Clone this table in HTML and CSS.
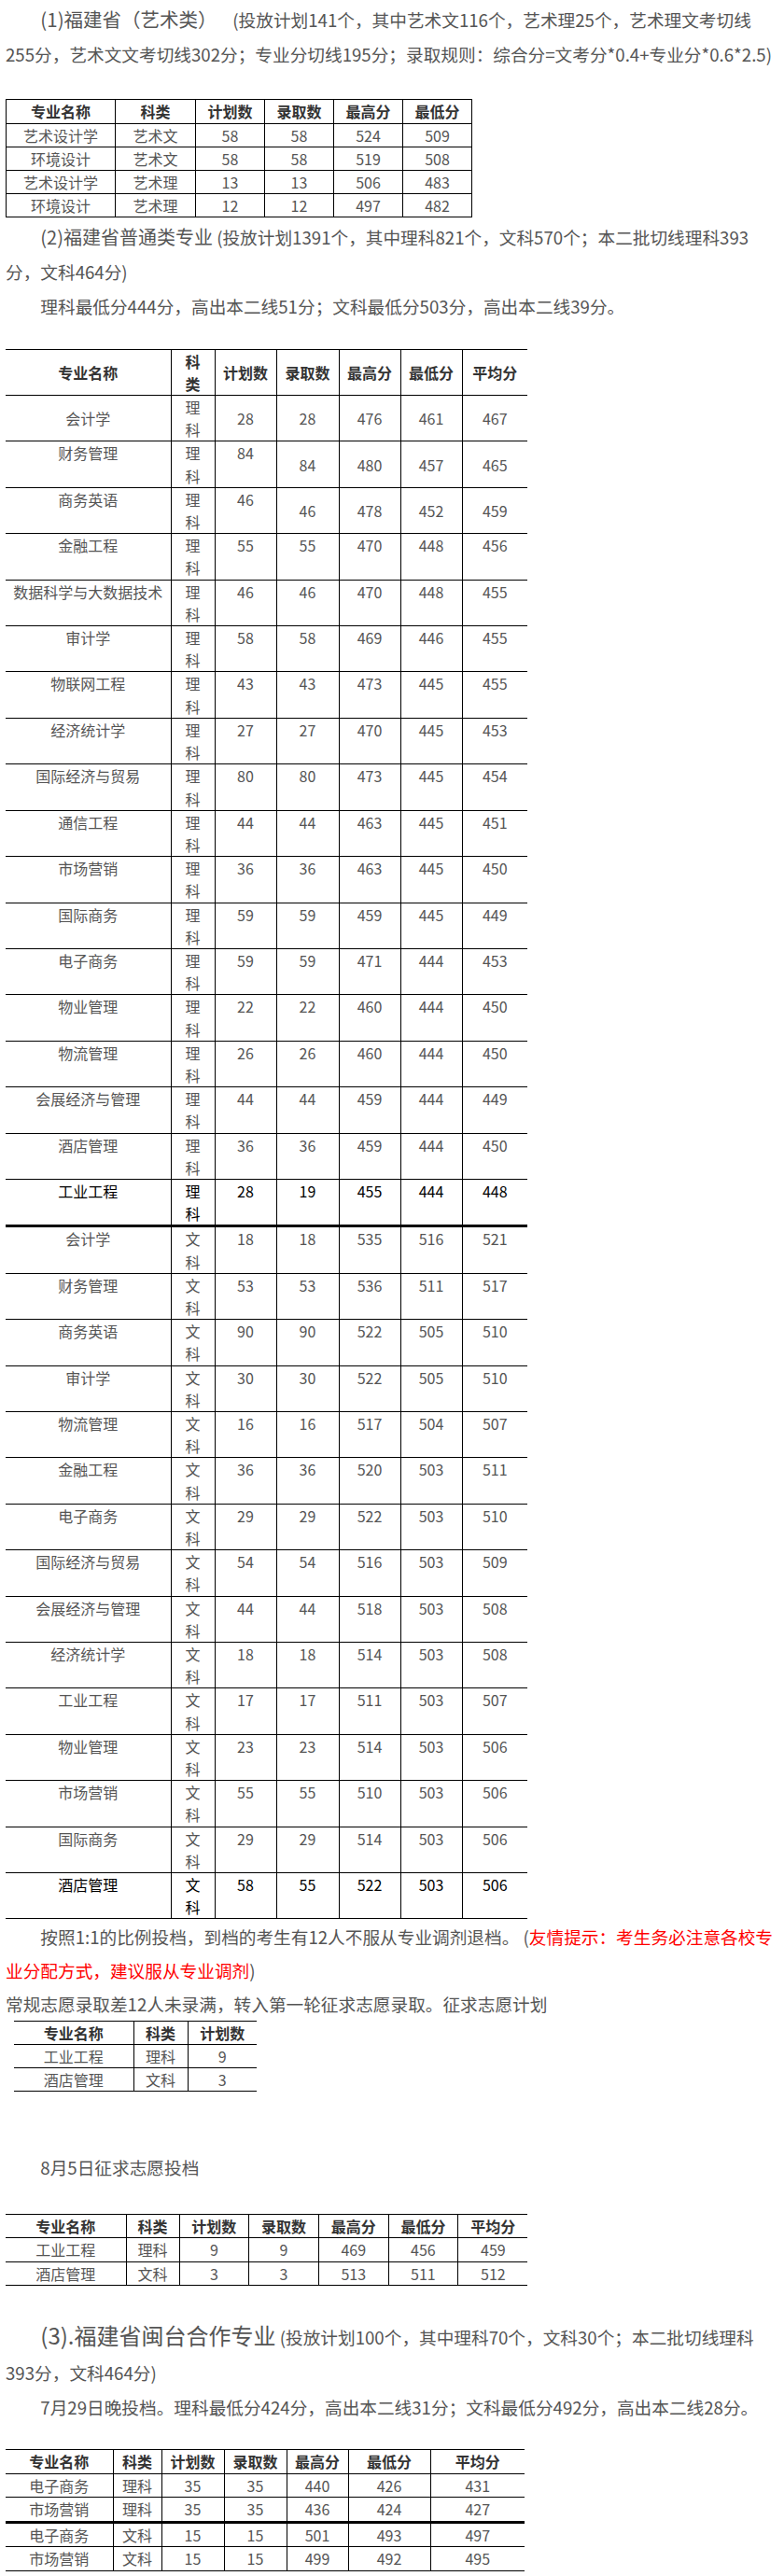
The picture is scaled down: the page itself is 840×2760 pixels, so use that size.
FILE: index.html
```html
<!DOCTYPE html>
<html lang="zh-CN">
<head>
<meta charset="utf-8">
<title>福建省录取情况</title>
<link rel="stylesheet" href="styles.css">
</head>
<body>
<div class="page">
  <p class="ind p1"><span class="lead lead-a">(1)福建省（艺术类）</span>&nbsp;&nbsp;&nbsp;&nbsp;(投放计划141个，其中艺术文116个，艺术理25个，艺术理文考切线255分，艺术文文考切线302分；专业分切线195分；录取规则：综合分=文考分*0.4+专业分*0.6*2.5)</p>

  <table class="t1">
    <colgroup><col class="c1"><col class="c2"><col class="c3"><col class="c3"><col class="c3"><col class="c3"></colgroup>
    <thead>
      <tr><th>专业名称</th><th>科类</th><th>计划数</th><th>录取数</th><th>最高分</th><th>最低分</th></tr>
    </thead>
    <tbody>
      <tr><td>艺术设计学</td><td>艺术文</td><td>58</td><td>58</td><td>524</td><td>509</td></tr>
      <tr><td>环境设计</td><td>艺术文</td><td>58</td><td>58</td><td>519</td><td>508</td></tr>
      <tr><td>艺术设计学</td><td>艺术理</td><td>13</td><td>13</td><td>506</td><td>483</td></tr>
      <tr><td>环境设计</td><td>艺术理</td><td>12</td><td>12</td><td>497</td><td>482</td></tr>
    </tbody>
  </table>

  <p class="ind p2"><span class="lead">(2)福建省普通类专业</span> (投放计划1391个，其中理科821个，文科570个；本二批切线理科393分，文科464分)</p>
  <p class="ind">理科最低分444分，高出本二线51分；文科最低分503分，高出本二线39分。</p>

  <table class="t2 open">
    <colgroup><col class="c1"><col class="c2"><col class="c3"><col class="c4"><col class="c5"><col class="c6"><col class="c7"></colgroup>
    <thead>
      <tr><th>专业名称</th><th class="k">科类</th><th>计划数</th><th>录取数</th><th>最高分</th><th>最低分</th><th>平均分</th></tr>
    </thead>
    <tbody>
      <tr class="mid"><td>会计学</td><td class="k">理科</td><td>28</td><td>28</td><td>476</td><td>461</td><td>467</td></tr>
      <tr><td>财务管理</td><td class="k">理科</td><td>84</td><td class="m">84</td><td class="m">480</td><td class="m">457</td><td class="m">465</td></tr>
      <tr><td>商务英语</td><td class="k">理科</td><td>46</td><td class="m">46</td><td class="m">478</td><td class="m">452</td><td class="m">459</td></tr>
      <tr><td>金融工程</td><td class="k">理科</td><td>55</td><td>55</td><td>470</td><td>448</td><td>456</td></tr>
      <tr><td>数据科学与大数据技术</td><td class="k">理科</td><td>46</td><td>46</td><td>470</td><td>448</td><td>455</td></tr>
      <tr><td>审计学</td><td class="k">理科</td><td>58</td><td>58</td><td>469</td><td>446</td><td>455</td></tr>
      <tr><td>物联网工程</td><td class="k">理科</td><td>43</td><td>43</td><td>473</td><td>445</td><td>455</td></tr>
      <tr><td>经济统计学</td><td class="k">理科</td><td>27</td><td>27</td><td>470</td><td>445</td><td>453</td></tr>
      <tr><td>国际经济与贸易</td><td class="k">理科</td><td>80</td><td>80</td><td>473</td><td>445</td><td>454</td></tr>
      <tr><td>通信工程</td><td class="k">理科</td><td>44</td><td>44</td><td>463</td><td>445</td><td>451</td></tr>
      <tr><td>市场营销</td><td class="k">理科</td><td>36</td><td>36</td><td>463</td><td>445</td><td>450</td></tr>
      <tr><td>国际商务</td><td class="k">理科</td><td>59</td><td>59</td><td>459</td><td>445</td><td>449</td></tr>
      <tr><td>电子商务</td><td class="k">理科</td><td>59</td><td>59</td><td>471</td><td>444</td><td>453</td></tr>
      <tr><td>物业管理</td><td class="k">理科</td><td>22</td><td>22</td><td>460</td><td>444</td><td>450</td></tr>
      <tr><td>物流管理</td><td class="k">理科</td><td>26</td><td>26</td><td>460</td><td>444</td><td>450</td></tr>
      <tr><td>会展经济与管理</td><td class="k">理科</td><td>44</td><td>44</td><td>459</td><td>444</td><td>449</td></tr>
      <tr><td>酒店管理</td><td class="k">理科</td><td>36</td><td>36</td><td>459</td><td>444</td><td>450</td></tr>
      <tr class="em sep"><td>工业工程</td><td class="k">理科</td><td>28</td><td>19</td><td>455</td><td>444</td><td>448</td></tr>
      <tr><td>会计学</td><td class="k">文科</td><td>18</td><td>18</td><td>535</td><td>516</td><td>521</td></tr>
      <tr><td>财务管理</td><td class="k">文科</td><td>53</td><td>53</td><td>536</td><td>511</td><td>517</td></tr>
      <tr><td>商务英语</td><td class="k">文科</td><td>90</td><td>90</td><td>522</td><td>505</td><td>510</td></tr>
      <tr><td>审计学</td><td class="k">文科</td><td>30</td><td>30</td><td>522</td><td>505</td><td>510</td></tr>
      <tr><td>物流管理</td><td class="k">文科</td><td>16</td><td>16</td><td>517</td><td>504</td><td>507</td></tr>
      <tr><td>金融工程</td><td class="k">文科</td><td>36</td><td>36</td><td>520</td><td>503</td><td>511</td></tr>
      <tr><td>电子商务</td><td class="k">文科</td><td>29</td><td>29</td><td>522</td><td>503</td><td>510</td></tr>
      <tr><td>国际经济与贸易</td><td class="k">文科</td><td>54</td><td>54</td><td>516</td><td>503</td><td>509</td></tr>
      <tr><td>会展经济与管理</td><td class="k">文科</td><td>44</td><td>44</td><td>518</td><td>503</td><td>508</td></tr>
      <tr><td>经济统计学</td><td class="k">文科</td><td>18</td><td>18</td><td>514</td><td>503</td><td>508</td></tr>
      <tr><td>工业工程</td><td class="k">文科</td><td>17</td><td>17</td><td>511</td><td>503</td><td>507</td></tr>
      <tr><td>物业管理</td><td class="k">文科</td><td>23</td><td>23</td><td>514</td><td>503</td><td>506</td></tr>
      <tr><td>市场营销</td><td class="k">文科</td><td>55</td><td>55</td><td>510</td><td>503</td><td>506</td></tr>
      <tr><td>国际商务</td><td class="k">文科</td><td>29</td><td>29</td><td>514</td><td>503</td><td>506</td></tr>
      <tr class="em"><td>酒店管理</td><td class="k">文科</td><td>58</td><td>55</td><td>522</td><td>503</td><td>506</td></tr>
    </tbody>
  </table>

  <p class="ind p4">按照1:1的比例投档，到档的考生有12人不服从专业调剂退档。 (<span class="red">友情提示：考生务必注意各校专业分配方式，建议服从专业调剂</span>)</p>
  <p class="p5">常规志愿录取差12人未录满，转入第一轮征求志愿录取。征求志愿计划</p>

  <table class="t3 open">
    <colgroup><col class="c1"><col class="c2"><col class="c3"></colgroup>
    <thead>
      <tr><th>专业名称</th><th>科类</th><th>计划数</th></tr>
    </thead>
    <tbody>
      <tr><td>工业工程</td><td>理科</td><td>9</td></tr>
      <tr><td>酒店管理</td><td>文科</td><td>3</td></tr>
    </tbody>
  </table>

  <p class="ind p6">8月5日征求志愿投档</p>

  <table class="t4 open">
    <colgroup><col class="c1"><col class="c2"><col class="c3"><col class="c3"><col class="c3"><col class="c3"><col class="c3"></colgroup>
    <thead>
      <tr><th>专业名称</th><th>科类</th><th>计划数</th><th>录取数</th><th>最高分</th><th>最低分</th><th>平均分</th></tr>
    </thead>
    <tbody>
      <tr><td>工业工程</td><td>理科</td><td>9</td><td>9</td><td>469</td><td>456</td><td>459</td></tr>
      <tr><td>酒店管理</td><td>文科</td><td>3</td><td>3</td><td>513</td><td>511</td><td>512</td></tr>
    </tbody>
  </table>

  <p class="ind p7"><span class="lead-lg">(3).福建省闽台合作专业</span> (投放计划100个，其中理科70个，文科30个；本二批切线理科393分，文科464分)</p>
  <p class="ind">7月29日晚投档。理科最低分424分，高出本二线31分；文科最低分492分，高出本二线28分。</p>

  <table class="t5 open">
    <colgroup><col class="c1"><col class="c2"><col class="c3"><col class="c4"><col class="c5"><col class="c6"><col class="c7"></colgroup>
    <thead>
      <tr><th>专业名称</th><th>科类</th><th>计划数</th><th>录取数</th><th>最高分</th><th>最低分</th><th>平均分</th></tr>
    </thead>
    <tbody>
      <tr><td>电子商务</td><td>理科</td><td>35</td><td>35</td><td>440</td><td>426</td><td>431</td></tr>
      <tr class="sep"><td>市场营销</td><td>理科</td><td>35</td><td>35</td><td>436</td><td>424</td><td>427</td></tr>
      <tr><td>电子商务</td><td>文科</td><td>15</td><td>15</td><td>501</td><td>493</td><td>497</td></tr>
      <tr><td>市场营销</td><td>文科</td><td>15</td><td>15</td><td>499</td><td>492</td><td>495</td></tr>
    </tbody>
  </table>
</div>
</body>
</html>
```

FILE: styles.css
```css
* { box-sizing: border-box; }
html, body { margin: 0; padding: 0; background: #fff; }
body {
  font-family: "Noto Sans CJK SC", "Microsoft YaHei", sans-serif;
  color: #555;
}
.page { width: 840px; padding: 2px 6px 0 6px; }

p { margin: 0; font-size: 18.67px; line-height: 37.33px; }
.ind { text-indent: 2em; }
.lead { font-size: 20px; line-height: 20px; }
.lead-a { font-size: 20.5px; }
.lead-lg { font-size: 24px; line-height: 24px; }
.red { color: #ff0000; }

table {
  border-collapse: collapse;
  table-layout: fixed;
  font-size: 16px;
  line-height: 24px;
  text-align: center;
}
th, td { border: 1px solid #000; padding: 0 4px; white-space: normal; }
th { font-weight: bold; color: #333; vertical-align: middle; }
td { vertical-align: middle; }

.open tr > :first-child { border-left: none; }
.open tr > :last-child { border-right: none; }

/* table 1 */
.t1 { width: 500px; margin-top: 29px; }
.t1 th { line-height: 25px; }
.t1 .c1 { width: 117px; }
.t1 .c2 { width: 86px; }
.t1 .c3 { width: 74px; }

.p2 { margin-top: 2px; }

/* table 2 */
.t2 { width: 559px; margin-top: 27px; line-height: 24.2px; }
.t2 .c1 { width: 177px; }
.t2 .c2 { width: 47px; }
.t2 .c3 { width: 66px; }
.t2 .c4 { width: 67px; }
.t2 .c5 { width: 66px; }
.t2 .c6 { width: 66px; }
.t2 .c7 { width: 70px; }
.t2 .k { padding: 0 9px; }
.t2 td { vertical-align: top; }
.t2 tr.mid td, .t2 td.m { vertical-align: middle; }
.t2 .em td { color: #000; }
.sep td { border-bottom: 3px solid #000; }

.p4 { margin-top: 1px; line-height: 36px; }
.p5 { line-height: 36px; }

/* table 3 */
.t3 { width: 260px; margin-left: 9px; line-height: 24px; }
.t3 .c1 { width: 128px; }
.t3 .c2 { width: 58px; }
.t3 .c3 { width: 74px; }

.p6 { margin-top: 62px; }

/* table 4 */
.t4 { width: 559px; margin-top: 31px; line-height: 24.5px; }
.t4 .c1 { width: 129px; }
.t4 .c2 { width: 57px; }
.t4 .c3 { width: 74.7px; }

.p7 { margin-top: 36px; }

/* table 5 */
.t5 { width: 556px; margin-top: 27px; line-height: 24.5px; }
.t5 .c1 { width: 115px; }
.t5 .c2 { width: 52px; }
.t5 .c3 { width: 67px; }
.t5 .c4 { width: 67px; }
.t5 .c5 { width: 66px; }
.t5 .c6 { width: 88px; }
.t5 .c7 { width: 101px; }
```
